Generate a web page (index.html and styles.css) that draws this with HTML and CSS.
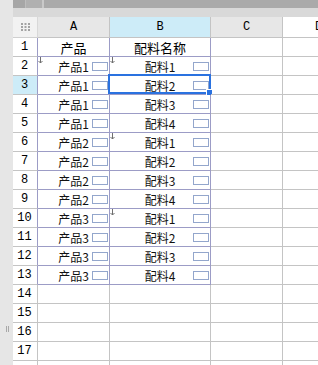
FILE: index.html
```html
<!DOCTYPE html>
<html lang="zh">
<head>
  <meta charset="UTF-8">
  <title>配料表</title>
  <link rel="stylesheet" href="styles.css">
</head>
<body>

<div class="app">
  <div class="side">
    <div class="grip"></div>
  </div>

  <div class="main">
    <div class="toolbar">
      <div class="tab tab-first"></div>
      <div class="tab tab-second"></div>
    </div>
    <div class="formula-bar"></div>

    <div class="sheet" id="sheet">
      <div class="corner">
        <svg width="9" height="8" viewBox="0 0 9 8">
          <rect x="0" y="0" width="2" height="2"/><rect x="3.5" y="0" width="2" height="2"/><rect x="7" y="0" width="2" height="2"/>
          <rect x="0" y="3" width="2" height="2"/><rect x="3.5" y="3" width="2" height="2"/><rect x="7" y="3" width="2" height="2"/>
          <rect x="0" y="6" width="2" height="2"/><rect x="3.5" y="6" width="2" height="2"/><rect x="7" y="6" width="2" height="2"/>
        </svg>
      </div>
      <div class="col-head">A</div>
      <div class="col-head active">B</div>
      <div class="col-head">C</div>
      <div class="col-head last">D</div>
    </div>
  </div>
</div>

<script>
  var rows = [
    ["产品1", "配料1", true, true],
    ["产品1", "配料2", false, false],
    ["产品1", "配料3", false, false],
    ["产品1", "配料4", false, false],
    ["产品2", "配料1", false, true],
    ["产品2", "配料2", false, false],
    ["产品2", "配料3", false, false],
    ["产品2", "配料4", false, false],
    ["产品3", "配料1", false, true],
    ["产品3", "配料2", false, false],
    ["产品3", "配料3", false, false],
    ["产品3", "配料4", false, false]
  ];

  var arrow = '<svg class="mark" width="5" height="7" viewBox="0 0 5 7"><path d="M2.5 0V6M0.5 4L2.5 6L4.5 4" fill="none" stroke="#6f6f6f" stroke-width="1"/></svg>';
  var sheet = document.getElementById("sheet");
  var html = "";

  // 表头行
  html += '<div class="row-head in-table">1</div>';
  html += '<div class="cell tbl title">产品</div>';
  html += '<div class="cell tbl title">配料名称</div>';
  html += '<div class="cell"></div><div class="cell last"></div>';

  // 数据行
  rows.forEach(function (r, i) {
    var n = i + 2;
    var selected = n === 3;
    html += '<div class="row-head in-table' + (selected ? ' active' : '') + '">' + n + '</div>';
    html += '<div class="cell tbl prod">' + (r[2] ? arrow : '') + '<span>' + r[0] + '</span><i class="box"></i></div>';
    html += '<div class="cell tbl part">' + (r[3] ? arrow : '') + '<span>' + r[1] + '</span><i class="box"></i>' +
      (selected ? '<div class="selection"><b class="handle"></b></div>' : '') + '</div>';
    html += '<div class="cell"></div><div class="cell last"></div>';
  });

  // 空行
  for (var n = 14; n <= 18; n++) {
    html += '<div class="row-head">' + (n < 18 ? n : '') + '</div>';
    html += '<div class="cell"></div><div class="cell"></div><div class="cell"></div><div class="cell last"></div>';
  }

  sheet.insertAdjacentHTML("beforeend", html);
</script>

</body>
</html>
```

FILE: styles.css
```css
* { margin: 0; padding: 0; box-sizing: border-box; }
html, body { width: 318px; height: 365px; overflow: hidden; background: #fff; }
body { font-family: "Noto Sans CJK SC", "Noto Sans", sans-serif; font-size: 12px; color: #111; }

.app { display: flex; height: 365px; }
.side { width: 13px; flex: none; background: #e6e6e6; position: relative; }
.grip { position: absolute; left: 6px; top: 326px; width: 3px; height: 6px; border-left: 1px solid #a8a8a8; border-right: 1px solid #a8a8a8; }

.main { flex: 1; min-width: 0; overflow: hidden; }
.toolbar { height: 8px; background: #aaaaaa; display: flex; }
.tab { height: 8px; }
.tab-first { width: 13px; background: #a6a6a6; border-right: 1px solid #bdbdbd; }
.tab-second { width: 18px; background: #b0b0b0; border-right: 2px solid #c9c9c9; }
.formula-bar { height: 9px; background: #d9d9d9; }

.sheet {
  display: grid;
  grid-template-columns: 25px 72px 101px 72px 1fr;
  grid-template-rows: 21px;
  grid-auto-rows: 19px;
}
.sheet > div { border-right: 1px solid #c4c4c4; border-bottom: 1px solid #c4c4c4; }

.corner { background: #f2f2f2; display: flex; align-items: center; justify-content: center; border-right-color: #d8d8d8 !important; border-bottom-color: #d0d0d0 !important; }
.corner svg { fill: #a3a3a3; }
.col-head { background: #e7e7e7; font-family: "Liberation Mono", monospace; font-size: 12px; display: flex; align-items: center; justify-content: center; color: #000; }
.col-head.active { background: #cdecf8; }
.col-head.last { background: #fff; justify-content: flex-start; padding-left: 32px; border-right: none !important; }

.row-head { background: #fff; font-family: "Liberation Mono", monospace; font-size: 12px; display: flex; align-items: center; justify-content: center; padding-right: 1px; color: #000; }
.row-head.active { background: #cdecf8; }
.row-head.in-table { border-right-color: #9c9cc6 !important; }

.cell { position: relative; }
.cell.last { border-right: none !important; }
.cell.tbl { border-color: #9c9cc6 !important; display: flex; align-items: center; }

.title { justify-content: center; font-size: 13px; color: #000; }
.prod { justify-content: flex-end; gap: 3px; }
.cell.part { display: grid; grid-template-columns: 1fr auto 1fr; align-items: center; }
.part span { grid-column: 2; }
.part .box { grid-column: 3; justify-self: end; }

.box { display: block; width: 16px; height: 9px; border: 1px solid #93a6cc; margin-top: 1px; margin-right: 1px; flex: none; }

.mark { position: absolute; left: 0; top: 0; }

.selection { position: absolute; left: -2px; top: -2px; width: 103px; height: 20px; border: 2px solid #2a72e0; pointer-events: none; }
.handle { position: absolute; right: -4px; bottom: -4px; width: 5px; height: 5px; background: #2a72e0; border: 1px solid #fff; box-sizing: content-box; }
```
